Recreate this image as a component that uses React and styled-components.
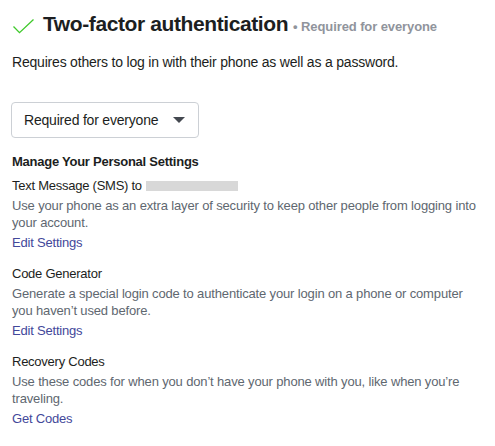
import styled, { createGlobalStyle } from 'styled-components'

const GlobalStyle = createGlobalStyle`
  body {
    margin: 0;
    background: #fff;
    font-family: "Liberation Sans", Arial, sans-serif;
    color: #1c1e21;
  }
`

const methods = [
  {
    title: 'Text Message (SMS) to',
    masked: true,
    body: 'Use your phone as an extra layer of security to keep other people from logging into your account.',
    link: 'Edit Settings'
  },
  {
    title: 'Code Generator',
    body: 'Generate a special login code to authenticate your login on a phone or computer you haven\u2019t used before.',
    link: 'Edit Settings'
  },
  {
    title: 'Recovery Codes',
    body: 'Use these codes for when you don\u2019t have your phone with you, like when you\u2019re traveling.',
    link: 'Get Codes'
  }
]

const Check = () => (
  <CheckIcon viewBox="0 0 21 15" width="21" height="15">
    <path d="M0.5 7.5 L6.5 13.7 L20.5 0.5" fill="none" stroke="#3fc92b" strokeWidth="1.3" />
  </CheckIcon>
)

const App = () => (
  <>
    <GlobalStyle />
    <Page>
      <Header>
        <Check />
        <Title>Two-factor authentication</Title>
        <Status>&bull; Required for everyone</Status>
      </Header>
      <Intro>Requires others to log in with their phone as well as a password.</Intro>
      <Select type="button">
        Required for everyone
        <Caret />
      </Select>
      <SectionTitle>Manage Your Personal Settings</SectionTitle>
      {methods.map((m) => (
        <Method key={m.title}>
          <MethodTitle>
            {m.title}
            {m.masked && <Masked />}
          </MethodTitle>
          <MethodBody>{m.body}</MethodBody>
          <Link href="#">{m.link}</Link>
        </Method>
      ))}
    </Page>
  </>
)

const Page = styled.div`
  padding: 11px 12px 0 12px;
  width: 495px;
  box-sizing: border-box;
`

const Header = styled.div`
  display: flex;
  align-items: baseline;
  height: 26px;
`

const CheckIcon = styled.svg`
  flex: none;
  align-self: center;
  margin: 4px 9px 0 1px;
`

const Title = styled.h2`
  margin: 0;
  font-size: 21px;
  line-height: 26px;
  font-weight: bold;
  letter-spacing: -0.4px;
  color: #1c1e21;
`

const Status = styled.span`
  margin-left: 5px;
  font-size: 13px;
  font-weight: bold;
  letter-spacing: -0.1px;
  color: #90949c;
`

const Intro = styled.p`
  margin: 16px 0 0 0;
  font-size: 14px;
  line-height: 18px;
  letter-spacing: -0.2px;
`

const Select = styled.button`
  display: flex;
  align-items: center;
  gap: 15px;
  margin: 31px 0 0 -1px;
  height: 36px;
  padding: 0 13px 0 12px;
  border: 1px solid #ccd0d5;
  border-radius: 4px;
  background: #fff;
  font-family: inherit;
  font-size: 14px;
  letter-spacing: -0.2px;
  color: #1c1e21;
`

const Caret = styled.span`
  width: 0;
  height: 0;
  border-left: 6px solid transparent;
  border-right: 6px solid transparent;
  border-top: 6px solid #444950;
`

const SectionTitle = styled.h3`
  margin: 15px 0 0 0;
  font-size: 13px;
  line-height: 17px;
  font-weight: bold;
  letter-spacing: -0.25px;
`

const Method = styled.div`
  margin-top: 7px;
  & + & {
    margin-top: 13px;
  }
`

const MethodTitle = styled.div`
  display: flex;
  align-items: center;
  font-size: 13px;
  line-height: 18px;
  letter-spacing: -0.25px;
`

const Masked = styled.span`
  display: inline-block;
  width: 92px;
  height: 10px;
  margin-left: 4px;
  background: #d8d8d8;
`

const MethodBody = styled.p`
  margin: 2px 0 0 0;
  font-size: 13px;
  line-height: 17px;
  letter-spacing: -0.15px;
  color: #606770;
`

const Link = styled.a`
  display: block;
  margin-top: 3px;
  font-size: 13px;
  line-height: 18px;
  letter-spacing: -0.2px;
  color: #43489a;
  text-decoration: none;
`

export default App
